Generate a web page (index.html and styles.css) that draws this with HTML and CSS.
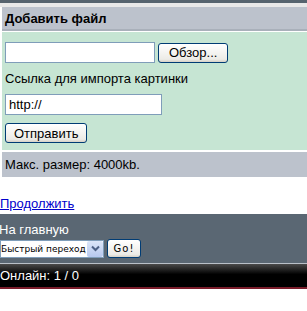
FILE: index.html
```html
<!DOCTYPE html>
<html lang="ru">
  <head>
    <meta charset="UTF-8" />
    <title>Добавить файл</title>
    <link rel="stylesheet" href="styles.css">
  </head>
  <body>
    <div class="top-band"></div>
    <div class="block">
      <div class="title">Добавить файл</div>
      <form class="form-box">
        <div class="row">
          <input type="text" class="file-field" />
          <button type="button" class="btn browse">Обзор...</button>
        </div>
        <div class="label">Ссылка для импорта картинки</div>
        <div class="row">
          <input type="text" class="url-field" value="http://" />
        </div>
        <div class="row">
          <button type="button" class="btn">Отправить</button>
        </div>
      </form>
      <div class="note">Макс. размер: 4000kb.</div>
    </div>
    <div class="links">
      <a href="#">Продолжить</a>
    </div>
    <div class="nav">
      <div class="nav-title">На главную</div>
      <form class="nav-form">
        <span class="select-wrap">
          <select class="jump">
            <option>Быстрый переход</option>
          </select>
          <span class="arrow">
            <svg width="9" height="7" viewBox="0 0 9 7">
              <path d="M1 1.5 L4.5 5 L8 1.5" fill="none" stroke="#4d6185" stroke-width="2" />
            </svg>
          </span>
        </span>
        <button type="button" class="go">Go!</button>
      </form>
    </div>
    <div class="footer">Онлайн: 1 / 0</div>
  </body>
</html>
```

FILE: styles.css
```css
body {
  margin: 0;
  font-family: "Liberation Sans", Arial, sans-serif;
  font-size: 13px;
  color: #000;
  background: #fff;
}
.top-band {
  height: 3px;
  background: #56636e;
  border-bottom: 4px solid #e8e8e8;
}
.block {
  margin-left: 2px;
}
.title {
  height: 22px;
  line-height: 23px;
  padding-left: 3px;
  font-weight: bold;
  font-size: 13px;
  background: #bcc2cc;
  border-bottom: 2px solid #a9b0ba;
}
.form-box {
  margin: 1px 0 0;
  padding: 10px 3px 7px;
  background: #c6e5d3;
}
.row {
  display: flex;
  align-items: center;
  gap: 3px;
  margin-bottom: 8px;
}
.row:last-child {
  margin-bottom: 0;
}
.label {
  margin-bottom: 8px;
}
input[type="text"] {
  box-sizing: border-box;
  height: 21px;
  padding: 1px 3px;
  font-family: "Liberation Sans", Arial, sans-serif;
  font-size: 13px;
  border: 1px solid #7f9db9;
  background: #fff;
}
.file-field {
  width: 150px;
}
.url-field {
  width: 157px;
}
.btn {
  height: 20px;
  padding: 0 8px;
  font-family: "Liberation Sans", Arial, sans-serif;
  font-size: 13px;
  border: 1px solid #003c74;
  border-radius: 3px;
  background: linear-gradient(#fff, #ecebe6 85%, #d6d0c5);
}
.browse {
  padding: 0 10px;
}
.note {
  margin-top: 2px;
  height: 25px;
  line-height: 25px;
  padding-left: 3px;
  background: #bcc2cc;
}
.links {
  padding: 19px 0 3px;
  line-height: 15px;
}
.links a {
  color: #00c;
}
.nav {
  background: #5a6773;
  color: #fff;
  padding: 8px 0 5px;
  border-bottom: 1px solid #b9c0c8;
}
.nav-title {
  margin-left: -1px;
  line-height: 15px;
}
.nav-form {
  display: flex;
  align-items: center;
  gap: 3px;
  margin-top: 2px;
}
.select-wrap {
  position: relative;
  display: inline-block;
}
.jump {
  appearance: none;
  box-sizing: border-box;
  width: 104px;
  height: 18px;
  padding: 0 17px 0 0;
  font-family: "DejaVu Sans", Verdana, sans-serif;
  font-size: 9px;
  color: #000;
  border: 1px solid #7f9db9;
  background: #fff;
  display: block;
}
.arrow {
  position: absolute;
  top: 1px;
  right: 1px;
  width: 16px;
  height: 16px;
  display: flex;
  align-items: center;
  justify-content: center;
  background: linear-gradient(#dce6f8, #b7c8ee);
  border-radius: 2px;
}
.go {
  height: 19px;
  width: 34px;
  padding: 0;
  font-family: "DejaVu Sans", Verdana, sans-serif;
  font-size: 10px;
  letter-spacing: 1px;
  border: 1px solid #003c74;
  border-radius: 3px;
  background: linear-gradient(#fff, #ecebe6 85%, #d6d0c5);
}
.footer {
  height: 23px;
  line-height: 23px;
  color: #fff;
  background: linear-gradient(#4a4a4a, #000 45%, #000);
  border-bottom: 2px solid #7a1c2a;
}
```
